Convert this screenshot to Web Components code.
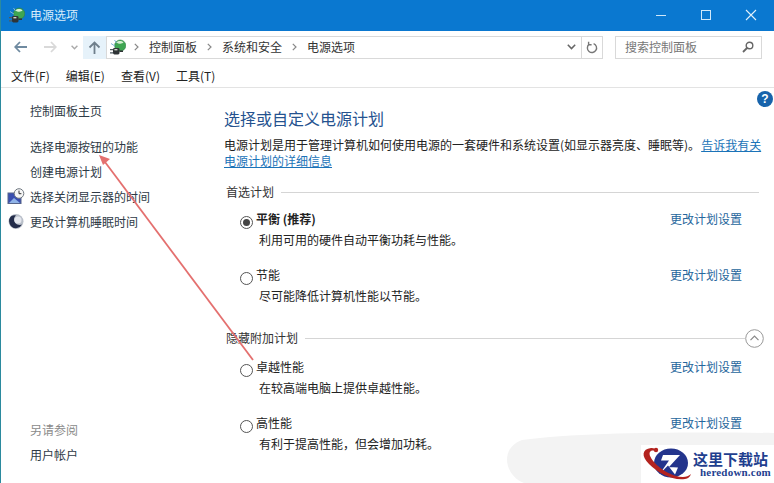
<!DOCTYPE html>
<html lang="zh">
<head>
<meta charset="utf-8">
<title>电源选项</title>
<style>
  html, body { margin: 0; }
  body {
    width: 774px;
    height: 483px;
    overflow: hidden;
    position: relative;
    background: #fff;
    color: #1a1a1a;
    font: 12px/16px "Noto Sans CJK SC", "Liberation Sans", sans-serif;
  }
</style>
</head>
<body>
<power-window></power-window>

<script>
/** Build a template from a string, same idea as a tagged html literal. */
const html = (strings, ...expressions) => {
  const template = document.createElement('template')
  template.innerHTML = strings.reduce((result, str, i) => result + str + (expressions[i] ?? ''), '')
  return template
}

/** Define an element that only stamps a template into an open shadow root. */
const define = (name, template) => {
  customElements.define(name, class extends HTMLElement {
    constructor() {
      super()
      this.attachShadow({ mode: 'open' })
      this.shadowRoot.appendChild(template.content.cloneNode(true))
    }
  })
}

const powerIcon = `
  <svg width="16" height="17" viewBox="0 0 16 17">
    <circle cx="10.2" cy="6.6" r="5.6" fill="#3fa652" stroke="#2f7f44" stroke-width=".6"/>
    <path d="M6.5 3.4c1.8-1.7 5-1.8 7 .2-1.6 1.4-5 1.4-7-.2z" fill="#d5f0d0"/>
    <path d="M1 4.5l4 2.6M4.5 1l2 3" stroke="#7fb5d6" stroke-width="1" fill="none"/>
    <rect x="3" y="9" width="6.5" height="6.5" rx="1.4" fill="#2f3436"/>
    <path d="M0 10.6h3M0 13.8h3" stroke="#4f5a60" stroke-width="1.2"/>
    <path d="M9.5 12.2h3.5" stroke="#2f3436" stroke-width="1.6"/>
    <rect x="4.4" y="10" width="3" height="1.4" fill="#cfd6c8"/>
  </svg>`

const chevron = `<svg width="5" height="8" viewBox="0 0 5 8"><path d="M.8.8L4 4 .8 7.2" fill="none" stroke="#888" stroke-width="1.2"/></svg>`

define('title-bar', html`
  <style>
    :host {
      display: flex;
      align-items: center;
      box-sizing: border-box;
      height: 31px;
      padding-bottom: 1px;
      background: #0a78d0;
      color: #d8ecfa;
    }
    .icon { display: flex; margin: 0 5px 0 8px; }
    .name { flex: 1; }
    .buttons { display: flex; margin-right: 17px; }
    .buttons svg { display: block; margin-left: 33px; }
  </style>
  <span class="icon">${powerIcon}</span>
  <span class="name">电源选项</span>
  <span class="buttons">
    <svg width="12" height="12" viewBox="0 0 12 12"><path d="M1 6.5h10" stroke="#cfe8fa"/></svg>
    <svg width="12" height="12" viewBox="0 0 12 12"><rect x="1.5" y="1.5" width="9" height="9" fill="none" stroke="#cfe8fa"/></svg>
    <svg width="12" height="12" viewBox="0 0 12 12"><path d="M1 1l10 10M11 1L1 11" stroke="#e3f1fb" stroke-width="1.1"/></svg>
  </span>
`)

define('nav-bar', html`
  <style>
    :host {
      display: flex;
      align-items: center;
      height: 32px;
      color: #333;
    }
    svg { display: block; flex: none; }
    .arrows { display: flex; align-items: center; width: 82px; }
    .back { margin-left: 13px; }
    .forward { margin-left: 17px; }
    .drop { margin-left: 14px; }
    .up {
      display: flex;
      align-items: center;
      justify-content: center;
      width: 23px;
      height: 23px;
      background: #e6f2fa;
    }
    .address {
      display: flex;
      align-items: center;
      width: 495px;
      height: 21px;
      border: 1px solid #d9d9d9;
    }
    .crumbs { display: flex; align-items: center; flex: 1; gap: 10px; padding-left: 3px; }
    .crumbs .site { margin-right: -2px; }
    .tail { display: flex; align-items: center; height: 100%; }
    .refresh {
      display: flex;
      align-items: center;
      justify-content: center;
      width: 20px;
      height: 100%;
      border-left: 1px solid #d9d9d9;
      margin-left: 5px;
    }
    .search {
      display: flex;
      align-items: center;
      justify-content: space-between;
      box-sizing: border-box;
      width: 147px;
      height: 23px;
      margin-left: 12px;
      padding: 0 7px 0 9px;
      border: 1px solid #d9d9d9;
      color: #777;
    }
  </style>
  <div class="arrows">
    <svg class="back" width="13" height="12" viewBox="0 0 13 12"><path d="M6 1L1.2 6 6 11M1.5 6H13" fill="none" stroke="#6f8aa0" stroke-width="1.8"/></svg>
    <svg class="forward" width="13" height="12" viewBox="0 0 13 12"><path d="M7 1l4.8 5L7 11M11.5 6H0" fill="none" stroke="#d9d9d9" stroke-width="1.8"/></svg>
    <svg class="drop" width="7" height="5" viewBox="0 0 7 5"><path d="M.6.8l2.9 3 2.9-3" fill="none" stroke="#aaa" stroke-width="1.4"/></svg>
  </div>
  <div class="up">
    <svg width="13" height="13" viewBox="0 0 13 13"><path d="M1.5 6.5l5-5 5 5M6.5 2v11" fill="none" stroke="#6f7f8c" stroke-width="1.8"/></svg>
  </div>
  <div class="address">
    <div class="crumbs">
      <span class="site">${powerIcon}</span>
      ${chevron}
      <span>控制面板</span>
      ${chevron}
      <span>系统和安全</span>
      ${chevron}
      <span>电源选项</span>
    </div>
    <div class="tail">
      <svg width="9" height="6" viewBox="0 0 9 6"><path d="M.8.8L4.5 4.6 8.2.8" fill="none" stroke="#666" stroke-width="1.5"/></svg>
      <div class="refresh">
        <svg width="12" height="13" viewBox="0 0 12 13"><path d="M7.6 2.6A4.6 4.6 0 1 1 3 3.4M2.6 .8V3.8H5.6" fill="none" stroke="#777" stroke-width="1.4"/></svg>
      </div>
    </div>
  </div>
  <div class="search">
    <span>搜索控制面板</span>
    <svg width="12" height="12" viewBox="0 0 12 12"><circle cx="7.5" cy="4.5" r="3.3" fill="none" stroke="#666" stroke-width="1.4"/><path d="M5 7L1 11" stroke="#666" stroke-width="1.8"/></svg>
  </div>
`)

define('menu-bar', html`
  <style>
    :host {
      display: flex;
      gap: 16px;
      align-items: center;
      box-sizing: border-box;
      height: 25px;
      padding: 1px 0 0 10px;
      border-bottom: 1px solid #e3e3e3;
      color: #222;
    }
  </style>
  <slot></slot>
`)

define('side-bar', html`
  <style>
    :host {
      display: flex;
      flex-direction: column;
      flex: none;
      width: 223px;
      padding-top: 10px;
      box-sizing: border-box;
    }
    .gap { flex: 1; }
    .foot { padding-bottom: 16px; }
  </style>
  <slot></slot>
  <div class="gap"></div>
  <div class="foot"><slot name="foot"></slot></div>
`)

define('side-link', html`
  <style>
    :host {
      display: flex;
      align-items: center;
      height: 25px;
      padding-left: 29px;
      position: relative;
      color: #2e3a46;
    }
    ::slotted(svg) { position: absolute; left: 6px; top: 4px; }
  </style>
  <slot name="icon"></slot>
  <slot></slot>
`)

define('section-head', html`
  <style>
    :host {
      display: flex;
      align-items: center;
      gap: 7px;
      height: 16px;
      padding: 0 15px 0 2px;
      color: #333;
    }
    .rule { flex: 1; height: 1px; background: #d5d5d5; }
    ::slotted(svg) { display: block; flex: none; margin: 0 -5px 0 -7px; }
  </style>
  <slot></slot>
  <div class="rule"></div>
  <slot name="end"></slot>
`)

define('plan-row', html`
  <style>
    :host {
      display: grid;
      grid-template-columns: 16px 1fr auto;
      align-items: center;
      height: 42px;
      padding: 0 32px 0 16px;
      color: #222;
    }
    .radio {
      box-sizing: border-box;
      width: 13px;
      height: 13px;
      margin-top: 6px;
      border: 1px solid #555;
      border-radius: 50%;
      display: flex;
      align-items: center;
      justify-content: center;
    }
    :host([selected]) .radio::after {
      content: "";
      width: 7px;
      height: 7px;
      border-radius: 50%;
      background: #444;
    }
    :host([selected]) .name { font-weight: 700; }
    .link { color: #26669c; }
    .desc { grid-column: 2 / 4; padding-left: 3px; }
  </style>
  <div class="radio"></div>
  <div class="name"><slot name="name"></slot></div>
  <div class="link">更改计划设置</div>
  <div class="desc"><slot name="desc"></slot></div>
`)

define('power-content', html`
  <style>
    :host {
      display: block;
      flex: 1;
      padding-top: 20px;
      position: relative;
    }
    h1 {
      margin: 0 0 9px;
      font: 400 16px/20px "Noto Sans CJK SC", "Liberation Sans", sans-serif;
      color: #24528f;
    }
    p { margin: 0 0 15px; color: #222; white-space: nowrap; }
    a { color: #1b73b8; text-decoration: underline; }
    .lead { margin-left: 1px; }
    .plans { padding-top: 8px; }
    .gap { height: 14px; }
    .hidden { margin-top: 24px; }
    .hidden + .plans { padding-top: 10px; }
    .help {
      position: absolute;
      top: 3px;
      right: 1px;
      width: 16px;
      height: 16px;
      border-radius: 50%;
      background: #1763ab;
      color: #fff;
      font: 700 12px/16px "Liberation Sans", sans-serif;
      text-align: center;
    }
  </style>
  <div class="help">?</div>
  <h1>选择或自定义电源计划</h1>
  <p>电源计划是用于管理计算机如何使用电源的一套硬件和系统设置(如显示器亮度、睡眠等)。<a class="lead">告诉我有关</a><br><a>电源计划的详细信息</a></p>
  <section-head>首选计划</section-head>
  <div class="plans">
    <plan-row selected><span slot="name">平衡 (推荐)</span><span slot="desc">利用可用的硬件自动平衡功耗与性能。</span></plan-row>
    <div class="gap"></div>
    <plan-row><span slot="name">节能</span><span slot="desc">尽可能降低计算机性能以节能。</span></plan-row>
  </div>
  <section-head class="hidden">隐藏附加计划
    <svg slot="end" width="19" height="19" viewBox="0 0 19 19"><circle cx="9.5" cy="9.5" r="8.8" fill="#fff" stroke="#999"/><path d="M5.5 11.2l4-4 4 4" fill="none" stroke="#888" stroke-width="1.2"/></svg>
  </section-head>
  <div class="plans">
    <plan-row><span slot="name">卓越性能</span><span slot="desc">在较高端电脑上提供卓越性能。</span></plan-row>
    <div class="gap"></div>
    <plan-row><span slot="name">高性能</span><span slot="desc">有利于提高性能，但会增加功耗。</span></plan-row>
  </div>
`)

define('site-mark', html`
  <style>
    :host {
      position: absolute;
      left: 641px;
      top: 445px;
      width: 133px;
      height: 38px;
      background: #fff;
      display: flex;
      align-items: center;
    }
    svg { display: block; flex: none; }
    .words { margin-top: 2px; }
    .cn {
      font: 700 15px/14px "Noto Sans CJK SC", serif;
      color: #1f3f8f;
      white-space: nowrap;
    }
    .en {
      font: 700 11px/12px "Liberation Serif", serif;
      color: #1f3f8f;
      letter-spacing: .2px;
      margin-left: 7px;
    }
  </style>
  <svg width="52" height="38" viewBox="0 0 52 38">
    <ellipse cx="30" cy="18" rx="17" ry="14.5" fill="#23348c"/>
    <path d="M22 10h17L28 22l9 .5-3 7-7-9-8 8 9-13h-8z" fill="#fff"/>
    <path d="M10 3C1 4 0 11 8 19c9 9 24 17 36 15 3-.5 5-2 6-5-2 2-5 3-8 3-10 0-22-7-29-15C9 12 7 8 10 6c2-1 4 0 6 .5-1-2-3-3.800-6-3.500z" fill="#b3231f"/>
    <circle cx="15" cy="5" r="2.200" fill="#b3231f"/>
  </svg>
  <div class="words">
    <div class="cn">这里下载站</div>
    <div class="en">heredown.com</div>
  </div>
`)

define('power-window', html`
  <style>
    :host {
      display: flex;
      flex-direction: column;
      height: 483px;
      box-sizing: border-box;
      border-left: 1px solid #2b8a9e;
    }
    .main { display: flex; flex: 1; min-height: 0; }
    .smear, .arrow { position: absolute; left: 0; top: 0; pointer-events: none; }
    .smear { z-index: 1; }
    .arrow { z-index: 2; }
    site-mark { z-index: 3; }
    .spacer { height: 11px; }
  </style>
  <title-bar></title-bar>
  <nav-bar></nav-bar>
  <menu-bar>
    <span>文件(F)</span><span>编辑(E)</span><span>查看(V)</span><span>工具(T)</span>
  </menu-bar>
  <div class="main">
    <side-bar>
      <side-link>控制面板主页</side-link>
      <div class="spacer"></div>
      <side-link>选择电源按钮的功能</side-link>
      <side-link>创建电源计划</side-link>
      <side-link>
        <svg slot="icon" width="18" height="17" viewBox="0 0 18 17">
          <rect x="1" y="5" width="13" height="10.500" fill="#3a4fb0" stroke="#56658a"/>
          <path d="M2 15l5-5 6 5z" fill="#8fb3e8"/>
          <circle cx="12" cy="5.500" r="4.800" fill="#f6f6f6" stroke="#6f7780"/>
          <path d="M12 2.600v3.100h2.400" fill="none" stroke="#333"/>
        </svg>
        选择关闭显示器的时间
      </side-link>
      <side-link>
        <svg slot="icon" width="18" height="17" viewBox="0 0 18 17">
          <circle cx="9" cy="8.500" r="7.500" fill="#b9bfc9"/>
          <path d="M5 2.500a7 7 0 0 0 5 12.600 7 7 0 0 0 5-3.500c-4 1.500-8.500-1.500-8-5.500.2-1.500 1-2.800 2-3.500-1.500-.6-2.800-.5-4 .1z" fill="#232c4a"/>
          <circle cx="11" cy="7" r="3.500" fill="#e4e7ee"/>
        </svg>
        更改计算机睡眠时间
      </side-link>
      <side-link slot="foot" style="color:#8a8a8a">另请参阅</side-link>
      <side-link slot="foot">用户帐户</side-link>
    </side-bar>
    <power-content></power-content>
  </div>
  <svg class="smear" width="774" height="483" viewBox="0 0 774 483">
    <path d="M522 440c60-8 170-8 252-7v50H524c-18-6-26-34-2-43z" fill="#f3f3f3"/>
  </svg>
  <svg class="arrow" width="774" height="483" viewBox="0 0 774 483">
    <path d="M253 360L105 162" stroke="#e4706f" stroke-width="1.800" fill="none"/>
    <path d="M99 155l11 4-7 6z" fill="#e4706f"/>
  </svg>
  <site-mark></site-mark>
`)
</script>
</body>
</html>
